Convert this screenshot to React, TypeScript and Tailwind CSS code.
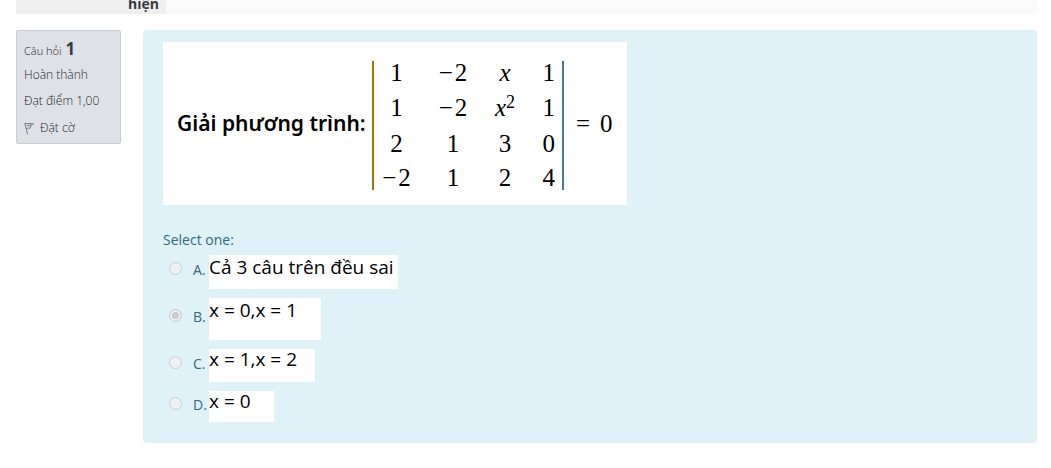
import React, { useState } from 'react';

const MinusTwo = () => <span className="inline-flex gap-0.5"><span>−</span><span>2</span></span>;

const matrix: React.ReactNode[][] = [
  ['1', <MinusTwo />, <i>x</i>, '1'],
  [
    '1',
    <MinusTwo />,
    <><i>x</i><sup className="relative -top-2 align-baseline text-[18px] leading-none">2</sup></>,
    '1',
  ],
  ['2', '1', '3', '0'],
  [<MinusTwo />, '1', '2', '4'],
];

const columns = ['w-[46px]', 'w-[68px]', 'w-9', 'w-10 pr-[7px] text-right'];
const rows = ['h-[29px] leading-6', 'h-9 leading-9', 'h-[35px] leading-[35px]', 'h-[29px] leading-[34px]'];

const answers = [
  { letter: 'A', text: 'Cả 3 câu trên đều sai', row: 'mb-[9px] h-[34px]', box: 'w-[189px] leading-6', align: 'mt-[7px]' },
  { letter: 'B', text: 'x = 0,x = 1', row: 'mb-[9px] h-[42px]', box: 'w-28 leading-6', align: 'mt-[11px]' },
  { letter: 'C', text: 'x = 1,x = 2', row: 'mb-[9px] h-[33px]', box: 'w-[106px] leading-5', align: 'mt-[7px]' },
  { letter: 'D', text: 'x = 0', row: 'h-[31px]', box: 'w-[65px] leading-5', align: 'mt-[6px]' },
];

function QuestionInfo() {
  return (
    <aside className="h-[114px] w-[105px] shrink-0 rounded-xs border border-[#c8ced6] bg-[#dee2e6] px-[7px] pt-[7px] text-[12px] font-light text-[#212529]">
      <h3 className="flex h-[25px] items-baseline gap-1 text-[11px] leading-[22px]">
        Câu hỏi <span className="text-[17px] font-bold text-[#373a3c]">1</span>
      </h3>
      <div className="h-[26px] leading-6">Hoàn thành</div>
      <div className="h-[26px] leading-6">Đạt điểm 1,00</div>
      <a href="#flag" className="flex h-[26px] items-center gap-1.5">
        <svg width="10" height="13" viewBox="0 0 10 13" fill="none" stroke="#83878b" strokeWidth="1.1">
          <path d="M.8 1 3.600 12.300M.8 1.200C3.200 2.200 6 1 9.400 1.700L7.200 3.200 5.800 6.200C4.500 5.600 3.200 6.200 2.200 6.600M3 3.400C4.200 3.800 5.400 3 6.600 3.100" />
        </svg>
        Đặt cờ
      </a>
    </aside>
  );
}

function Determinant() {
  return (
    <table className="mt-1 border-x-2 border-l-[#a87412] border-r-[#4b7698] text-center">
      <tbody>
        {matrix.map((row, r) => (
          <tr key={r}>
            {row.map((cell, c) => (
              <td key={c} className={`p-0 whitespace-nowrap ${columns[c]}`}>
                <div className={rows[r]}>{cell}</div>
              </td>
            ))}
          </tr>
        ))}
      </tbody>
    </table>
  );
}

export default function App() {
  const [selected, setSelected] = useState('B');

  return (
    <main className="bg-white px-4 pr-3.5 font-['Open_Sans','Noto_Sans',sans-serif]">
      <div className="flex h-3.5 overflow-hidden bg-[#fafafa]">
        <div className="flex w-[150px] items-end justify-end bg-[#efefef] pr-[7px] text-[14px] leading-5 font-bold text-[#373a3c]">
          hiện
        </div>
      </div>

      <div className="mt-4 flex items-start gap-[22px]">
        <QuestionInfo />
        <section className="min-w-0 flex-1 rounded bg-[#def2f8] px-5 pt-3 pb-[21px]">
          <div className="flex h-[163px] w-[464px] items-center bg-white pl-3.5 text-black">
            <h2 className="w-[195px] font-['Noto_Sans',sans-serif] text-[21px] font-semibold whitespace-nowrap">
              Giải phương trình:
            </h2>
            <div className="flex items-center gap-3 font-['Liberation_Serif',serif] text-[25px]">
              <Determinant />
              <span className="flex gap-2.5">
                <span>=</span>
                <span>0</span>
              </span>
            </div>
          </div>

          <fieldset className="mt-6">
            <legend className="h-[26px] text-[14px] leading-[22px] text-[#336a7f]">Select one:</legend>
            {answers.map(({ letter, text, row, box, align }) => (
              <div key={letter} className={`flex items-start ${row}`}>
                <input
                  id={`answer-${letter}`}
                  type="radio"
                  name="answer"
                  checked={selected === letter}
                  onChange={() => setSelected(letter)}
                  className={`ml-1.5 size-[13px] appearance-none rounded-full border border-[#c9cdcf] bg-[#edf1f3] checked:bg-[#c8cbcd] checked:shadow-[inset_0_0_0_2px_#edf1f3] ${align}`}
                />
                <label htmlFor={`answer-${letter}`} className="ml-[11px] flex h-full items-start">
                  <span className={`min-w-4 text-[14px] leading-4 text-[#336a7f] ${align}`}>{letter}.</span>
                  <span className={`block h-full bg-white text-[19px] whitespace-nowrap text-black ${box}`}>{text}</span>
                </label>
              </div>
            ))}
          </fieldset>
        </section>
      </div>
    </main>
  );
}
